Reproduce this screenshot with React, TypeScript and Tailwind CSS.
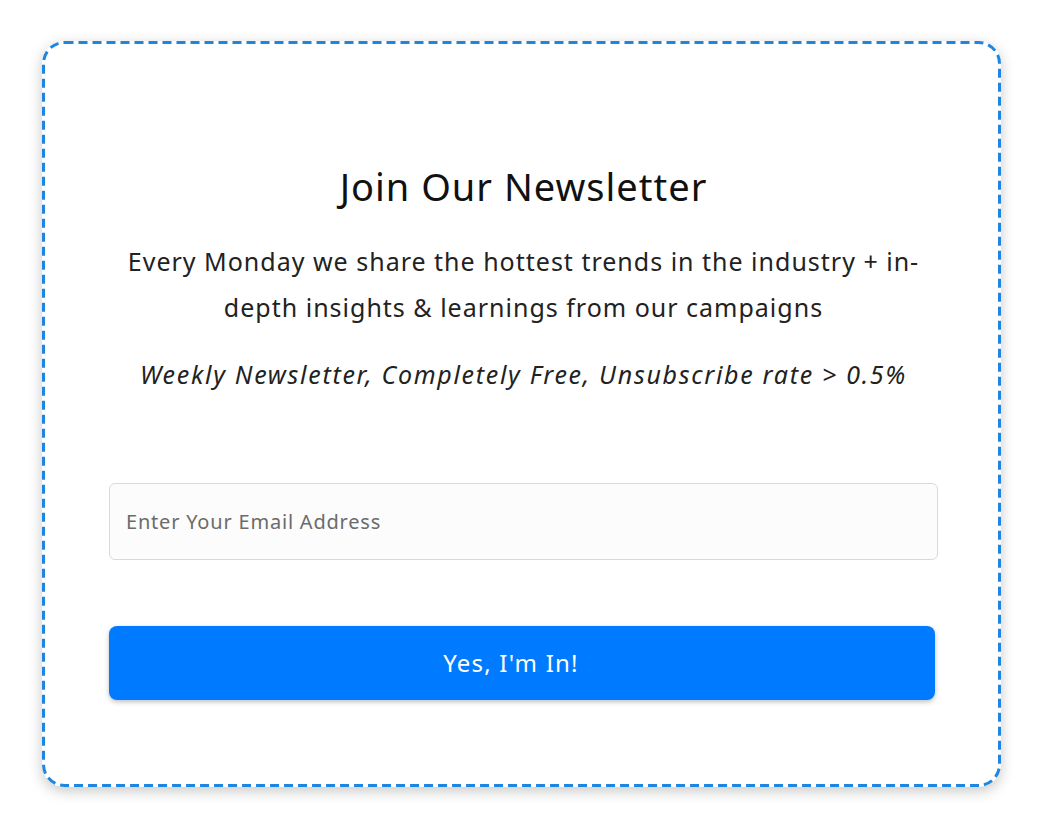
export default function App() {
  return (
    <div className="min-h-[816px] w-[1040px] bg-white pl-[42px] pt-[41px]" style={{ fontFamily: '"Noto Sans", "Open Sans", sans-serif' }}>
      <div className="relative flex h-[746px] w-[959px] flex-col rounded-[22px] bg-white pl-[67px] pr-[63px] pt-[119px] shadow-[0_4px_14px_rgba(0,0,0,0.22)]">
        <svg className="pointer-events-none absolute left-0 top-0" width="959" height="746" viewBox="0 0 959 746">
          <rect x="1.5" y="1.5" width="956" height="743" rx="21" ry="21" fill="none" stroke="#1e86e0" strokeWidth="3" strokeDasharray="9 5" />
        </svg>
        <h1 className="text-center text-[38px] leading-[52px] tracking-[1px] text-[#111]">Join Our Newsletter</h1>
        <p className="mt-[26px] text-center text-[25px] leading-[46px] tracking-[1px] text-[#222]">
          Every Monday we share the hottest trends in the industry + in-depth insights &amp; learnings from our campaigns
        </p>
        <p className="mt-[26px] text-center text-[25px] italic leading-[36px] tracking-[1.7px] text-[#222]">
          Weekly Newsletter, Completely Free, Unsubscribe rate &gt; 0.5%
        </p>
        <input
          type="text"
          placeholder="Enter Your Email Address"
          className="mt-[91px] h-[77px] w-[829px] rounded-[6px] border border-[#d9d9d9] bg-[#fcfcfc] px-[16px] text-[20px] tracking-[0.8px] text-[#222] placeholder:text-[#6b6b6b] outline-none"
        />
        <button className="mt-[66px] h-[74px] w-[826px] rounded-[8px] bg-[#007bff] pr-[22px] text-[24px] tracking-[1.2px] text-white shadow-[0_2px_5px_rgba(0,0,0,0.25)]">
          Yes, I'm In!
        </button>
      </div>
    </div>
  );
}
